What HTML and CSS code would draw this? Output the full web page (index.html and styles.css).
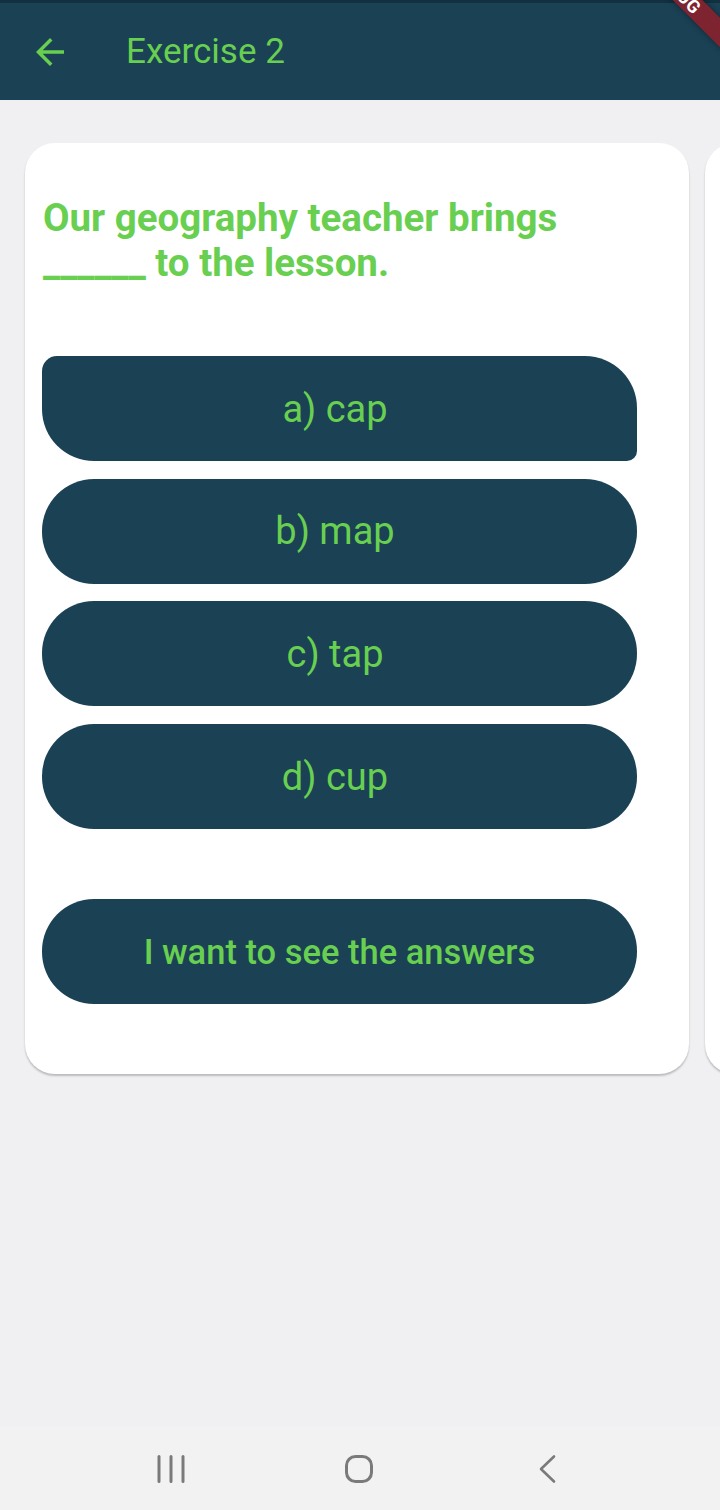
FILE: index.html
```html
<!DOCTYPE html>
<html lang="en">
<head>
<meta charset="utf-8">
<title>Exercise 2</title>
<link rel="stylesheet" href="styles.css">
</head>
<body>
<div class="screen">
  <header class="appbar">
    <svg class="back" viewBox="0 0 24 24" width="42" height="42"><path d="M20 11H7.83l5.59-5.59L12 4l-8 8 8 8 1.41-1.41L7.83 13H20v-2z" fill="#68cf50"/></svg>
    <h1 class="title">Exercise 2</h1>
  </header>
  <div class="debug">DEBUG</div>
  <main class="pager">
    <section class="card">
      <p class="question">Our geography teacher brings ______ to the lesson.</p>
      <div class="options">
        <button class="option option-active">a) cap</button>
        <button class="option">b) map</button>
        <button class="option">c) tap</button>
        <button class="option">d) cup</button>
      </div>
      <button class="answers">I want to see the answers</button>
    </section>
    <section class="card card-next"></section>
  </main>
  <nav class="navbar">
    <span class="nav-item">
      <svg viewBox="0 0 30 30" width="30" height="30"><path d="M3 2.5v25M15 2.5v25M27 2.5v25" stroke="#7a7a7a" stroke-width="3" stroke-linecap="round" fill="none"/></svg>
    </span>
    <span class="nav-item">
      <svg viewBox="0 0 30 30" width="30" height="30"><rect x="2.5" y="2.5" width="25" height="25" rx="9" stroke="#7a7a7a" stroke-width="3" fill="none"/></svg>
    </span>
    <span class="nav-item">
      <svg viewBox="0 0 30 30" width="30" height="30"><path d="M22 2.5L9 15l13 12.5" stroke="#7a7a7a" stroke-width="2.6" stroke-linecap="round" stroke-linejoin="round" fill="none"/></svg>
    </span>
  </nav>
</div>
</body>
</html>
```
FILE: styles.css
```css
* { box-sizing: border-box; }
html, body {
  margin: 0;
  padding: 0;
}
body {
  width: 720px;
  height: 1510px;
  overflow: hidden;
  background: #f0eff2;
  font-family: Roboto, "Noto Sans", sans-serif;
}
.screen {
  position: relative;
  width: 720px;
  height: 1510px;
  display: flex;
  flex-direction: column;
  overflow: hidden;
}
.appbar {
  height: 100px;
  flex-shrink: 0;
  background: #1b4155;
  border-top: 3px solid #12303f;
  display: flex;
  align-items: center;
  padding-left: 29px;
}
.back {
  display: block;
  margin-right: 55px;
  margin-top: 1px;
}
.title {
  margin: 0;
  font-size: 35px;
  font-weight: 400;
  color: #68cf50;
  line-height: 1;
}
.debug {
  position: absolute;
  left: 602px;
  top: -21.5px;
  width: 150px;
  height: 21px;
  background: #7d2430;
  color: #fff;
  font-family: Roboto, sans-serif;
  font-weight: 700;
  font-size: 18px;
  line-height: 21px;
  text-align: center;
  letter-spacing: 0.5px;
  transform: rotate(45deg);
  box-shadow: 0 0 6px rgba(0,0,0,0.4);
}
.pager {
  flex: 1;
  display: flex;
  align-items: flex-start;
  gap: 16px;
  padding: 43px 0 0 25px;
  overflow: hidden;
}
.card {
  flex-shrink: 0;
  width: 664px;
  background: #fff;
  border-radius: 30px;
  box-shadow: 0 2px 2px rgba(0,0,0,0.22);
  padding: 52px 52px 70px 17px;
}
.card-next {
  height: 931px;
}
.question {
  margin: 0 0 71px 1px;
  font-size: 38.5px;
  font-weight: 700;
  line-height: 45px;
  color: #68cf50;
}
.options {
  display: flex;
  flex-direction: column;
  gap: 17.7px;
  margin-bottom: 70px;
}
.option, .answers {
  display: block;
  width: 595px;
  height: 105px;
  border: none;
  background: #1b4155;
  color: #68cf50;
  font-family: Roboto, sans-serif;
  border-radius: 52px;
  padding: 0;
  text-align: center;
}
.option {
  font-size: 38px;
  font-weight: 400;
  padding-right: 9px;
}
.option-active {
  border-radius: 15px 52px 10px 52px;
}
.answers {
  font-size: 34.5px;
  font-weight: 500;
}
.navbar {
  height: 83px;
  flex-shrink: 0;
  background: #f2f2f3;
  display: flex;
  align-items: center;
  padding-left: 156px;
  gap: 158px;
}
.nav-item {
  display: block;
  width: 30px;
  height: 30px;
}
.nav-item svg { display: block; }
```
